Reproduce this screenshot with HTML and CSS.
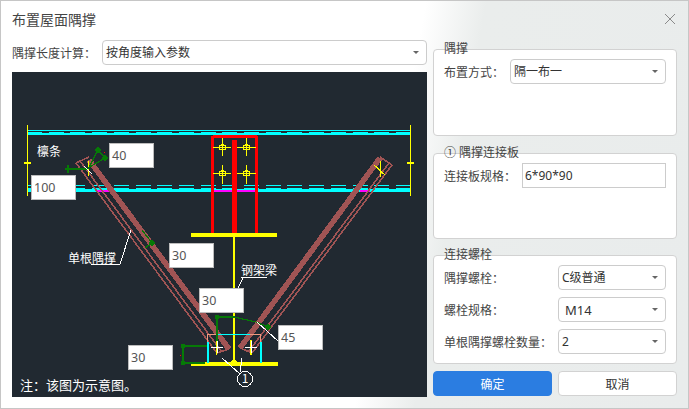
FILE: index.html
```html
<!DOCTYPE html>
<html lang="zh-CN">
<head>
    <meta charset="UTF-8">
    <meta name="viewport" content="width=device-width, initial-scale=1.0">
    <title>布置屋面隅撑</title>
    <link rel="stylesheet" href="styles.css">
</head>
<body>
    <div class="dialog">
        <div class="dialog-header">
            <span class="dialog-title">布置屋面隅撑</span>
            <svg class="close-icon" width="12" height="12" viewBox="0 0 12 12">
                <path d="M1 1L11 11M11 1L1 11"></path>
            </svg>
        </div>
        <div class="dialog-body">
            <div class="left-col">
                <div class="length-row">
                    <label class="field-label length-label">隅撑长度计算：</label>
                    <div class="select">按角度输入参数</div>
                </div>
                <div class="diagram">
                    <svg class="diagram-svg" width="415" height="325" viewBox="12 72 415 325">
                        <!-- purlin -->
                        <g class="cyan">
                            <line x1="27" y1="130.5" x2="411" y2="130.5"></line>
                            <line class="dash" x1="27" y1="132" x2="411" y2="132"></line>
                            <line class="thick" x1="27" y1="134" x2="411" y2="134"></line>
                            <line class="dash" x1="27" y1="185.5" x2="411" y2="185.5"></line>
                            <line class="dash" x1="27" y1="188.5" x2="411" y2="188.5"></line>
                            <line class="thick" x1="27" y1="190.5" x2="411" y2="190.5"></line>
                        </g>
                        <g class="magenta">
                            <line x1="97" y1="190.5" x2="110" y2="190.5"></line>
                            <line x1="214" y1="190.5" x2="255" y2="190.5"></line>
                            <line x1="360" y1="190.5" x2="370" y2="190.5"></line>
                        </g>
                        <!-- braces -->
                        <g class="brace">
                            <line class="heavy" x1="89" y1="160" x2="229" y2="349"></line>
                            <line x1="76" y1="163" x2="217" y2="353"></line>
                            <line x1="80" y1="161" x2="222" y2="352"></line>
                            <line x1="76" y1="163" x2="89" y2="157"></line>
                            <line x1="217" y1="353" x2="229" y2="349"></line>
                            <line class="heavy" x1="380" y1="158" x2="240" y2="348"></line>
                            <line x1="392" y1="165" x2="252" y2="353"></line>
                            <line x1="389" y1="163" x2="249" y2="351"></line>
                            <line x1="380" y1="157" x2="392" y2="165"></line>
                            <line x1="240" y1="348" x2="252" y2="353"></line>
                        </g>
                        <!-- stiffener plates -->
                        <g class="red">
                            <line x1="212.5" y1="136" x2="256.5" y2="136"></line>
                            <line x1="212.5" y1="136" x2="212.5" y2="234"></line>
                            <line x1="256.5" y1="136" x2="256.5" y2="234"></line>
                            <line class="web" x1="234.5" y1="140" x2="234.5" y2="234"></line>
                        </g>
                        <!-- steel beam -->
                        <g class="yellow">
                            <line class="flange" x1="191" y1="235" x2="277" y2="235"></line>
                            <line class="flange" x1="191" y1="364" x2="278" y2="364"></line>
                            <line class="wide" x1="234" y1="235" x2="234" y2="362"></line>
                            <line x1="27.5" y1="125" x2="27.5" y2="196"></line>
                            <line class="wide" x1="24" y1="163" x2="31" y2="163"></line>
                            <line x1="410.5" y1="125" x2="410.5" y2="196"></line>
                            <line class="wide" x1="407" y1="163" x2="414" y2="163"></line>
                            <line x1="213" y1="147.5" x2="231" y2="147.5"></line>
                            <line x1="222.5" y1="138" x2="222.5" y2="156"></line>
                            <line x1="237" y1="147.5" x2="256" y2="147.5"></line>
                            <line x1="246.5" y1="138" x2="246.5" y2="156"></line>
                            <line x1="213" y1="173.5" x2="231" y2="173.5"></line>
                            <line x1="222.5" y1="165" x2="222.5" y2="184"></line>
                            <line x1="237" y1="173.5" x2="256" y2="173.5"></line>
                            <line x1="246.5" y1="165" x2="246.5" y2="184"></line>
                            <ellipse cx="222.5" cy="147.5" rx="3.5" ry="2.5"></ellipse>
                            <ellipse cx="246.5" cy="147.5" rx="3.5" ry="2.5"></ellipse>
                            <ellipse cx="222.5" cy="173.5" rx="3.5" ry="2.5"></ellipse>
                            <ellipse cx="246.5" cy="173.5" rx="3.5" ry="2.5"></ellipse>
                            <line x1="88.5" y1="161" x2="88.5" y2="176"></line>
                            <line x1="380.5" y1="161" x2="380.5" y2="177"></line>
                            <line x1="374" y1="165" x2="385" y2="175"></line>
                            <line x1="216.5" y1="340" x2="216.5" y2="355"></line>
                            <line x1="251" y1="340" x2="251" y2="355"></line>
                            <circle cx="234" cy="362" r="2"></circle>
                        </g>
                        <!-- connecting plate -->
                        <g class="cyan">
                            <line x1="216" y1="334" x2="250" y2="334"></line>
                            <line class="thick" x1="208" y1="342" x2="208" y2="363"></line>
                            <line class="thick" x1="261" y1="342" x2="261" y2="363"></line>
                        </g>
                        <path class="salmon" d="M207.5 342V334.5H216M250 334.5H260.5V342"></path>
                        <!-- dimensions -->
                        <g class="green">
                            <path d="M65 169H88L98 150L105 158L88 168"></path>
                            <path d="M142 230L152 243L145 248"></path>
                            <path d="M182 346H207M183 346V363M182 363H205"></path>
                            <path d="M217 341V317H234L256 322L268 327"></path>
                            <circle cx="98" cy="150" r="2"></circle>
                            <circle cx="105" cy="158" r="2"></circle>
                            <circle cx="152" cy="243" r="2"></circle>
                            <circle cx="183" cy="346" r="1.5"></circle>
                            <circle cx="183" cy="363" r="1.5"></circle>
                            <circle cx="217" cy="317" r="1.5"></circle>
                            <circle cx="268" cy="327" r="2"></circle>
                            <path d="M68 165V173"></path>
                        </g>
                        <rect class="red-dot" x="104" y="152" width="1" height="1"></rect>
                        <rect class="red-dot" x="180" y="355" width="1" height="1"></rect>
                        <!-- leaders and marks -->
                        <g class="white">
                            <path d="M84 166L92 174M211 347H223M217 341V353M245 347H257M251 341V353"></path>
                            <path d="M91 264H120L131 230"></path>
                            <path d="M241 277H267M238 288L243 278"></path>
                            <path d="M257 322L278 341"></path>
                            <path d="M222 358L240 374M242 358L240 372"></path>
                            <circle cx="245" cy="379" r="7.5"></circle>
                        </g>
                        <text class="cad-text" x="37" y="156">檩条</text>
                        <text class="cad-text" x="68" y="263">单根隅撑</text>
                        <text class="cad-text" x="241" y="275">钢架梁</text>
                        <text class="cad-text mark-text" x="245" y="383">1</text>
                    </svg>
                    <div class="value-box box-40">40</div>
                    <div class="value-box box-100">100</div>
                    <div class="value-box box-30a">30</div>
                    <div class="value-box box-30b">30</div>
                    <div class="value-box box-45">45</div>
                    <div class="value-box box-30c">30</div>
                    <div class="diagram-note">注：该图为示意图。</div>
                </div>
            </div>
            <div class="right-col">
                <div class="group group-brace">
                    <div class="group-title">隅撑</div>
                    <div class="group-row">
                        <label class="field-label label-brace">布置方式：</label>
                        <div class="select">隔一布一</div>
                    </div>
                </div>
                <div class="group group-plate">
                    <div class="group-title">① 隅撑连接板</div>
                    <div class="group-row">
                        <label class="field-label label-plate">连接板规格：</label>
                        <input class="text-input" type="text" value="6*90*90">
                    </div>
                </div>
                <div class="group group-bolt">
                    <div class="group-title">连接螺栓</div>
                    <div class="group-row">
                        <label class="field-label label-bolt">隅撑螺栓：</label>
                        <div class="select">C级普通</div>
                    </div>
                    <div class="group-row">
                        <label class="field-label label-bolt">螺栓规格：</label>
                        <div class="select select-m14">M14</div>
                    </div>
                    <div class="group-row">
                        <label class="field-label label-bolt">单根隅撑螺栓数量：</label>
                        <div class="select">2</div>
                    </div>
                </div>
                <div class="button-row">
                    <button class="btn btn-primary">确定</button>
                    <button class="btn">取消</button>
                </div>
            </div>
        </div>
    </div>
</body>
</html>
```

FILE: styles.css
```css
* {
    box-sizing: border-box;
}
body {
    margin: 0;
    font-family: "Noto Sans", "Noto Sans CJK SC", sans-serif;
    font-size: 12px;
    color: #444;
}
.dialog {
    width: 689px;
    height: 409px;
    border: 1px solid #c6c6c6;
    background: linear-gradient(100deg, #fff 56%, #eaedec 64%, #e9ecec 100%);
    overflow: hidden;
}
.dialog-header {
    display: flex;
    justify-content: space-between;
    align-items: center;
    height: 39px;
    padding: 0 12px 3px 11px;
}
.dialog-title {
    font-size: 14px;
    color: #444;
}
.close-icon path {
    fill: none;
    stroke: #8a8a8a;
    stroke-width: 1;
}
.dialog-body {
    display: flex;
    padding-left: 11px;
    gap: 6px;
}
.left-col {
    width: 415px;
}
.length-row {
    display: flex;
    align-items: center;
    height: 25px;
    margin-bottom: 7px;
}
.length-label {
    width: 90px;
}
.field-label {
    flex: none;
    padding-top: 1px;
    color: #444;
    white-space: nowrap;
}
.select {
    position: relative;
    flex: 1;
    height: 25px;
    line-height: 24px;
    padding-left: 3px;
    border: 1px solid #ccc;
    border-radius: 4px;
    background: #fff;
    color: #333;
}
.select::after {
    content: "";
    position: absolute;
    right: 7px;
    top: 10px;
    border-left: 3px solid transparent;
    border-right: 3px solid transparent;
    border-top: 3px solid #666;
}
.select-m14 {
    padding-left: 6px;
    font-size: 13px;
}
.text-input {
    flex: 1;
    min-width: 0;
    height: 25px;
    padding: 0 2px;
    border: 1px solid #ccc;
    background: #fff;
    font: inherit;
    color: #333;
    outline: none;
}

/* diagram */
.diagram {
    position: relative;
    width: 415px;
    height: 325px;
    background: #212931;
    overflow: hidden;
}
.diagram-svg {
    display: block;
    shape-rendering: crispEdges;
}
.diagram-svg line,
.diagram-svg path,
.diagram-svg circle,
.diagram-svg ellipse {
    fill: none;
    stroke-width: 1;
}
.cyan line { stroke: #0ff; }
.cyan .thick { stroke-width: 2.5; }
.cyan .dash { stroke-dasharray: 15 6.7; }
.magenta line { stroke: #f0f; stroke-width: 2; }
.brace line { stroke: #a05454; stroke-width: 1.6; }
.brace .heavy { stroke-width: 5.5; }
.red line { stroke: #f00; stroke-width: 3; }
.red .web { stroke-width: 5; }
.yellow line,
.yellow ellipse,
.yellow circle { stroke: #ff0; stroke-width: 1.2; }
.yellow .flange { stroke-width: 3.5; }
.yellow .wide { stroke-width: 2.5; }
.green path,
.green circle { stroke: #067a06; stroke-width: 1.2; }
.green circle { fill: #067a06; }
.white path,
.white circle { stroke: #fff; stroke-width: 1; }
.diagram-svg .salmon { stroke: #f09a80; }
.red-dot { fill: #f00; }
.cad-text {
    fill: #fff;
    font-size: 12px;
    font-family: "Noto Sans CJK SC", sans-serif;
}
.mark-text {
    text-anchor: middle;
}
.value-box {
    position: absolute;
    width: 45px;
    height: 25px;
    line-height: 23px;
    padding-left: 2px;
    border: 1px solid #bdbdbd;
    background: #fff;
    color: #555;
    font-size: 12.5px;
}
.box-40 { left: 97px; top: 71px; }
.box-100 { left: 19px; top: 103px; }
.box-30a { left: 157px; top: 171px; }
.box-30b { left: 187px; top: 216px; }
.box-45 { left: 266px; top: 253px; }
.box-30c { left: 116px; top: 273px; }
.diagram-note {
    position: absolute;
    left: 8px;
    bottom: 3px;
    color: #fff;
    font-size: 13px;
}

/* right column */
.right-col {
    width: 244px;
    padding-top: 9px;
}
.group {
    padding: 9px 10px 0;
    border: 1px solid #d2d2d2;
    border-radius: 4px;
    background: #fff;
}
.group-title {
    height: 0;
    line-height: 0;
    margin-top: -10px;
    margin-bottom: 10px;
    color: #444;
}
.group-brace {
    height: 87px;
    margin-bottom: 17px;
}
.group-plate {
    height: 86px;
    margin-bottom: 16px;
}
.group-bolt {
    height: 109px;
    margin-bottom: 7px;
}
.group-row {
    display: flex;
    align-items: center;
    margin-bottom: 7px;
}
.label-brace {
    width: 66px;
}
.label-plate {
    width: 78px;
}
.label-bolt {
    width: 114px;
}
.button-row {
    display: flex;
    gap: 6px;
}
.btn {
    flex: 1;
    height: 25px;
    padding: 0;
    border: 1px solid #d2d2d2;
    border-radius: 4px;
    background: #fff;
    font: inherit;
    color: #333;
}
.btn-primary {
    border-color: #2b7de1;
    background: #2b7de1;
    color: #fff;
}
```
